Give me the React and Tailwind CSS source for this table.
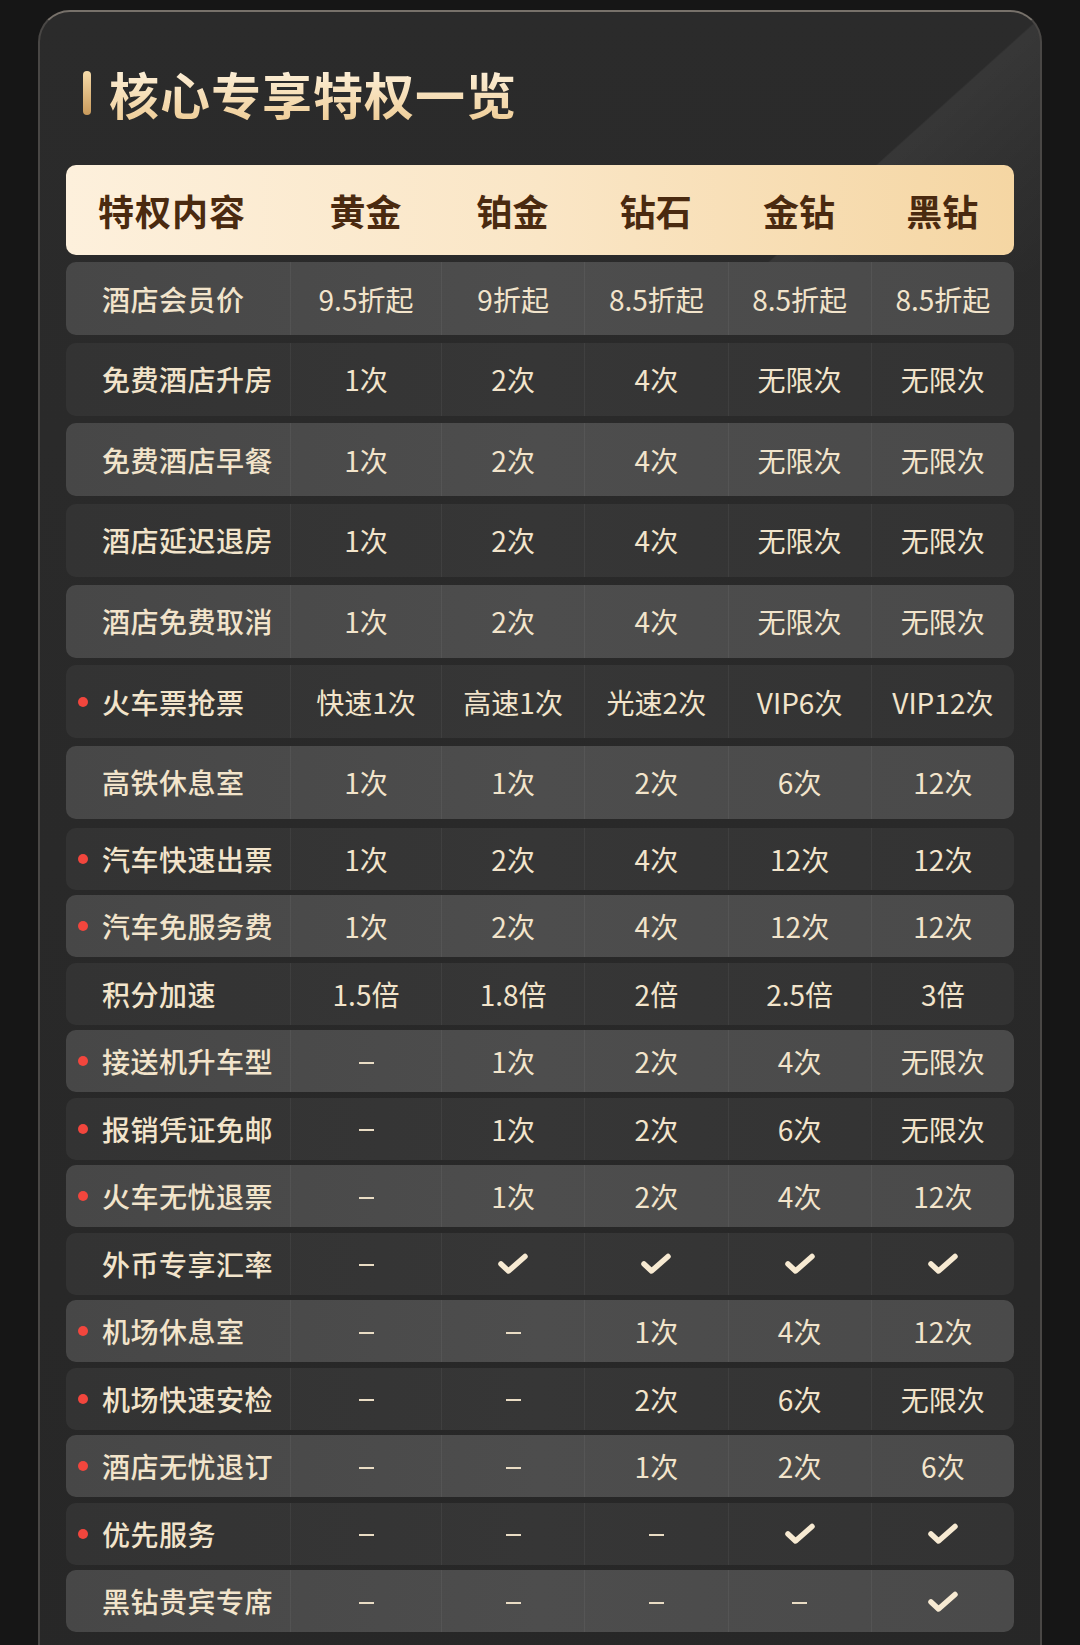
import React from "react";

const tiers = ["黄金", "铂金", "钻石", "金钻", "黑钻"];

// "-" = not included, "ok" = checkmark
const rows = [
  { name: "酒店会员价", vals: ["9.5折起", "9折起", "8.5折起", "8.5折起", "8.5折起"] },
  { name: "免费酒店升房", vals: ["1次", "2次", "4次", "无限次", "无限次"] },
  { name: "免费酒店早餐", vals: ["1次", "2次", "4次", "无限次", "无限次"] },
  { name: "酒店延迟退房", vals: ["1次", "2次", "4次", "无限次", "无限次"] },
  { name: "酒店免费取消", vals: ["1次", "2次", "4次", "无限次", "无限次"] },
  { name: "火车票抢票", dot: true, vals: ["快速1次", "高速1次", "光速2次", "VIP6次", "VIP12次"] },
  { name: "高铁休息室", vals: ["1次", "1次", "2次", "6次", "12次"] },
  { name: "汽车快速出票", dot: true, small: true, vals: ["1次", "2次", "4次", "12次", "12次"] },
  { name: "汽车免服务费", dot: true, small: true, vals: ["1次", "2次", "4次", "12次", "12次"] },
  { name: "积分加速", small: true, vals: ["1.5倍", "1.8倍", "2倍", "2.5倍", "3倍"] },
  { name: "接送机升车型", dot: true, small: true, vals: ["-", "1次", "2次", "4次", "无限次"] },
  { name: "报销凭证免邮", dot: true, small: true, vals: ["-", "1次", "2次", "6次", "无限次"] },
  { name: "火车无忧退票", dot: true, small: true, vals: ["-", "1次", "2次", "4次", "12次"] },
  { name: "外币专享汇率", small: true, vals: ["-", "ok", "ok", "ok", "ok"] },
  { name: "机场休息室", dot: true, small: true, vals: ["-", "-", "1次", "4次", "12次"] },
  { name: "机场快速安检", dot: true, small: true, vals: ["-", "-", "2次", "6次", "无限次"] },
  { name: "酒店无忧退订", dot: true, small: true, vals: ["-", "-", "1次", "2次", "6次"] },
  { name: "优先服务", dot: true, small: true, vals: ["-", "-", "-", "ok", "ok"] },
  { name: "黑钻贵宾专席", small: true, vals: ["-", "-", "-", "-", "ok"] },
];

function Check() {
  return (
    <svg width="30" height="21" viewBox="0 0 30 21" fill="none">
      <polyline
        points="3,11 10.5,18 27,3.5"
        stroke="#f7ead2"
        strokeWidth="5.5"
        strokeLinecap="round"
        strokeLinejoin="round"
      />
    </svg>
  );
}

function Cell({ v }) {
  if (v === "-") return <div className="w-[15px] h-[2px] mt-[3px] bg-[#e9dcc4]" />;
  if (v === "ok") return <Check />;
  return <span>{v}</span>;
}

export default function App() {
  return (
    <div
      className="min-h-[1645px] bg-[#161616] pl-[38px] pr-[38px] pt-[10px] overflow-hidden"
      style={{ fontFamily: '"Noto Sans CJK SC", "Noto Sans", sans-serif' }}
    >
      <div className="w-[1004px] h-[1700px] rounded-[32px] border-2 border-[#494745] border-t-[#77716a] bg-[#292929] bg-[linear-gradient(138deg,rgba(255,255,255,0)_0%,rgba(255,255,255,0)_78%,rgba(255,255,255,0.06)_78.2%,rgba(255,255,255,0.02)_92%,rgba(255,255,255,0)_100%),linear-gradient(180deg,#2b2b2b,#272727)] bg-[length:100%_260px,100%_100%] bg-no-repeat px-[26px] pt-[54px]">
        {/* Title */}
        <div className="flex items-center h-[54px] pl-[17px]">
          <div className="w-[8px] h-[44px] rounded-full bg-[linear-gradient(180deg,#f7dcaa,#c99a5b)]" />
          <h2 className="ml-[18px] text-[50px] leading-[54px] font-bold bg-[linear-gradient(180deg,#fdf1dc,#f0cf9a)] bg-clip-text text-transparent tracking-[1px]">
            核心专享特权一览
          </h2>
        </div>

        {/* Header row */}
        <div className="mt-[45px] h-[90px] rounded-[10px] bg-[linear-gradient(90deg,#fdf0dc_0%,#fae6c6_50%,#f5d6a3_100%)] grid grid-cols-[224px_151px_repeat(4,1fr)] items-center text-[36px] font-bold text-[#4a2a10]">
          <div className="pl-[32px] tracking-[1px]">特权内容</div>
          {tiers.map((t) => (
            <div key={t} className="text-center">
              {t}
            </div>
          ))}
        </div>

        {/* Benefit rows */}
        <div className="mt-[7px]">
          {rows.map((r, i) => (
            <div
              key={r.name}
              className={`grid grid-cols-[224px_151px_repeat(4,1fr)] rounded-[10px] text-[#f2e4cb] ${
                r.small ? "h-[62px]" : "h-[73px]"
              } ${i === 0 ? "" : r.small ? (i === 7 ? "mt-[9px]" : "mt-[5.5px]") : "mt-[7.67px]"} ${
                i % 2 === 0
                  ? "bg-[linear-gradient(90deg,#474747,#4d4d4d_50%,#4a4a4a)]"
                  : "bg-[linear-gradient(90deg,#333333,#363636_50%,#333333)]"
              }`}
            >
              <div className="relative flex items-center pl-[36px] text-[28px] font-medium tracking-[0.5px]">
                {r.dot && (
                  <span className="absolute left-[12px] top-1/2 -translate-y-1/2 w-[10px] h-[10px] rounded-full bg-[#f2463d]" />
                )}
                {r.name}
              </div>
              {r.vals.map((v, j) => (
                <div
                  key={j}
                  className="flex items-center justify-center border-l border-white/[0.05] text-[28px]"
                >
                  <Cell v={v} />
                </div>
              ))}
            </div>
          ))}
        </div>
      </div>
    </div>
  );
}
